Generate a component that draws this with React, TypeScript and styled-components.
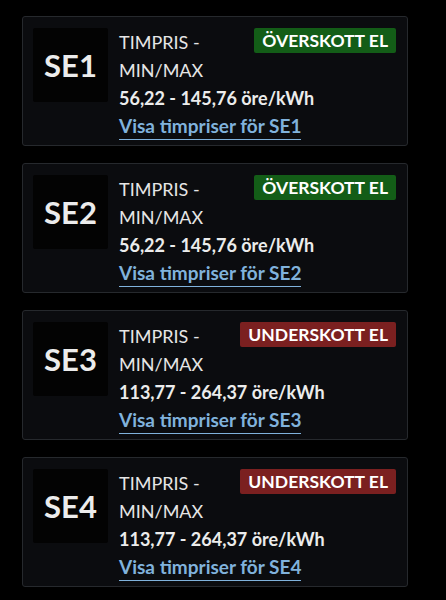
import React from "react";
import styled, { createGlobalStyle } from "styled-components";

const Global = createGlobalStyle`
  html, body { margin: 0; padding: 0; background: #000; }
  body { font-family: "Source Sans Pro", Lato, "Noto Sans", sans-serif; color: #e6e6e6; }
`;

const List = styled.div`
  display: flex;
  flex-direction: column;
  gap: 17px;
  width: 386px;
  padding: 16px 0 0 22px;
`;

const Card = styled.div`
  display: flex;
  gap: 11px;
  background: #0b0c0f;
  border: 1px solid #26292d;
  border-radius: 3px;
  padding: 11px 11px 5px 10px;
`;

const AreaBox = styled.div`
  flex: 0 0 75px;
  height: 74px;
  background: #030303;
  border-radius: 2px;
  display: flex;
  align-items: center;
  justify-content: center;
  font-size: 31px;
  font-weight: 700;
  color: #ececec;
`;

const Body = styled.div`
  flex: 1;
  display: flex;
  flex-direction: column;
  font-size: 18px;
  line-height: 28px;
`;

const Head = styled.div`
  display: flex;
  justify-content: space-between;
  align-items: flex-start;
  gap: 10px;
`;

const Title = styled.div`
  flex: 1;
  text-transform: uppercase;
  color: #e6e6e6;
`;

const Badge = styled.span<{ $surplus: boolean }>`
  flex: none;
  background: ${(p) => (p.$surplus ? "#135d17" : "#7b2020")};
  color: #fff;
  font-weight: 700;
  font-size: 17.5px;
  line-height: 25px;
  padding: 0 8px;
  border-radius: 2px;
`;

const Price = styled.div`
  font-weight: 700;
  color: #ececec;
`;

const LinkRow = styled.div``;

const Link = styled.a`
  font-weight: 700;
  font-size: 19px;
  color: #80b2dc;
  text-decoration: none;
  border-bottom: 1px solid #80b2dc;
  padding-bottom: 2px;
`;

const areas = [
  { id: "SE1", surplus: true, price: "56,22 - 145,76 öre/kWh" },
  { id: "SE2", surplus: true, price: "56,22 - 145,76 öre/kWh" },
  { id: "SE3", surplus: false, price: "113,77 - 264,37 öre/kWh" },
  { id: "SE4", surplus: false, price: "113,77 - 264,37 öre/kWh" },
];

export default function App() {
  return (
    <>
      <Global />
      <List>
        {areas.map((a) => (
          <Card key={a.id}>
            <AreaBox>{a.id}</AreaBox>
            <Body>
              <Head>
                <Title>Timpris - min/max</Title>
                <Badge $surplus={a.surplus}>{a.surplus ? "ÖVERSKOTT EL" : "UNDERSKOTT EL"}</Badge>
              </Head>
              <Price>{a.price}</Price>
              <LinkRow>
                <Link href="#">Visa timpriser för {a.id}</Link>
              </LinkRow>
            </Body>
          </Card>
        ))}
      </List>
    </>
  );
}
